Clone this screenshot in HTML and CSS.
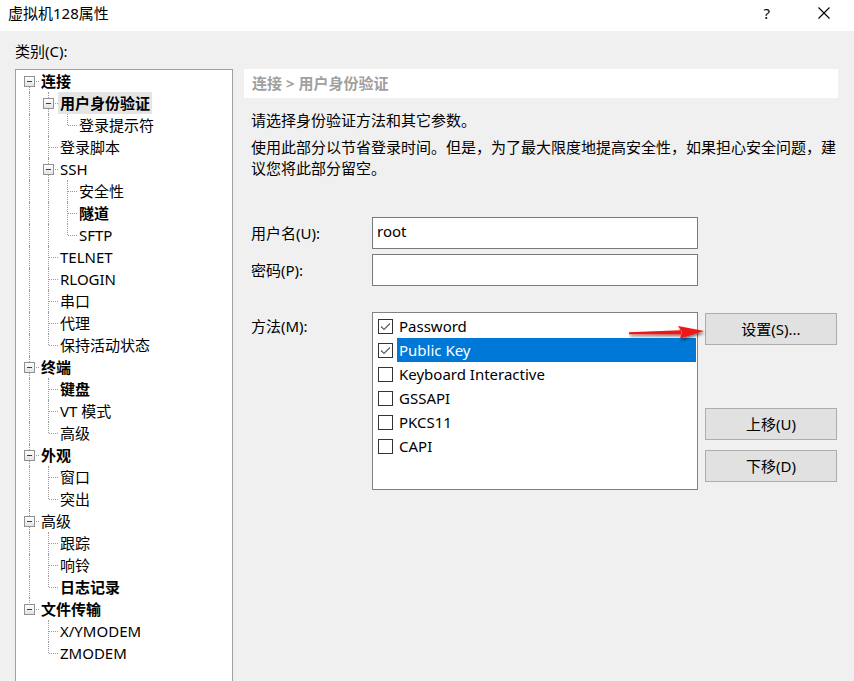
FILE: index.html
```html
<!DOCTYPE html>
<html lang="zh-CN">
<head>
<meta charset="utf-8">
<title>虚拟机128属性</title>
<link rel="stylesheet" href="styles.css">
</head>
<body>
<div class="window">
  <div class="titlebar">
    <span class="title">虚拟机128属性</span>
    <div class="ctrls">
      <span class="help">?</span>
      <svg class="close" width="12" height="12" viewBox="0 0 12 12"><path d="M0.5 0.5 L11.5 11.5 M11.5 0.5 L0.5 11.5" stroke="#000" stroke-width="1.1" fill="none"/></svg>
    </div>
  </div>
  <div class="body">
    <div class="cat-label">类别(C):</div>
    <div class="main">
      <div class="tree">
        <div class="row"><span class="c bf"><span class="bx"></span></span><span class="lbl b">连接</span></div>
        <div class="row"><span class="c v"></span><span class="c bm"><span class="bx"></span></span><span class="lbl b sel">用户身份验证</span></div>
        <div class="row"><span class="c v"></span><span class="c v"></span><span class="c l"></span><span class="lbl">登录提示符</span></div>
        <div class="row"><span class="c v"></span><span class="c t"></span><span class="lbl">登录脚本</span></div>
        <div class="row"><span class="c v"></span><span class="c bm"><span class="bx"></span></span><span class="lbl">SSH</span></div>
        <div class="row"><span class="c v"></span><span class="c v"></span><span class="c t"></span><span class="lbl">安全性</span></div>
        <div class="row"><span class="c v"></span><span class="c v"></span><span class="c t"></span><span class="lbl b">隧道</span></div>
        <div class="row"><span class="c v"></span><span class="c v"></span><span class="c l"></span><span class="lbl">SFTP</span></div>
        <div class="row"><span class="c v"></span><span class="c t"></span><span class="lbl">TELNET</span></div>
        <div class="row"><span class="c v"></span><span class="c t"></span><span class="lbl">RLOGIN</span></div>
        <div class="row"><span class="c v"></span><span class="c t"></span><span class="lbl">串口</span></div>
        <div class="row"><span class="c v"></span><span class="c t"></span><span class="lbl">代理</span></div>
        <div class="row"><span class="c v"></span><span class="c l"></span><span class="lbl">保持活动状态</span></div>
        <div class="row"><span class="c bm"><span class="bx"></span></span><span class="lbl b">终端</span></div>
        <div class="row"><span class="c v"></span><span class="c t"></span><span class="lbl b">键盘</span></div>
        <div class="row"><span class="c v"></span><span class="c t"></span><span class="lbl">VT 模式</span></div>
        <div class="row"><span class="c v"></span><span class="c l"></span><span class="lbl">高级</span></div>
        <div class="row"><span class="c bm"><span class="bx"></span></span><span class="lbl b">外观</span></div>
        <div class="row"><span class="c v"></span><span class="c t"></span><span class="lbl">窗口</span></div>
        <div class="row"><span class="c v"></span><span class="c l"></span><span class="lbl">突出</span></div>
        <div class="row"><span class="c bm"><span class="bx"></span></span><span class="lbl">高级</span></div>
        <div class="row"><span class="c v"></span><span class="c t"></span><span class="lbl">跟踪</span></div>
        <div class="row"><span class="c v"></span><span class="c t"></span><span class="lbl">响铃</span></div>
        <div class="row"><span class="c v"></span><span class="c l"></span><span class="lbl b">日志记录</span></div>
        <div class="row"><span class="c bl"><span class="bx"></span></span><span class="lbl b">文件传输</span></div>
        <div class="row"><span class="c"></span><span class="c t"></span><span class="lbl">X/YMODEM</span></div>
        <div class="row"><span class="c"></span><span class="c l"></span><span class="lbl">ZMODEM</span></div>
      </div>
      <div class="panel">
        <div class="crumb">连接 &gt; 用户身份验证</div>
        <div class="panel-body">
          <p class="p1">请选择身份验证方法和其它参数。</p>
          <p class="p2">使用此部分以节省登录时间。但是，为了最大限度地提高安全性，如果担心安全问题，建<br>议您将此部分留空。</p>
          <div class="frow first">
            <span class="flabel">用户名(U):</span>
            <div class="field">root</div>
          </div>
          <div class="frow">
            <span class="flabel">密码(P):</span>
            <div class="field"></div>
          </div>
          <div class="method">
            <span class="flabel mlabel">方法(M):</span>
            <div class="list">
              <div class="item"><span class="chk on"><svg width="13" height="13" viewBox="0 0 13 13"><path d="M2 6.5 L5 9.5 L11 3.5" stroke="#5a5a5a" stroke-width="1.1" fill="none"/></svg></span><span class="itxt">Password</span></div>
              <div class="item"><span class="chk on"><svg width="13" height="13" viewBox="0 0 13 13"><path d="M2 6.5 L5 9.5 L11 3.5" stroke="#5a5a5a" stroke-width="1.1" fill="none"/></svg></span><span class="itxt sel">Public Key</span></div>
              <div class="item"><span class="chk"></span><span class="itxt">Keyboard Interactive</span></div>
              <div class="item"><span class="chk"></span><span class="itxt">GSSAPI</span></div>
              <div class="item"><span class="chk"></span><span class="itxt">PKCS11</span></div>
              <div class="item"><span class="chk"></span><span class="itxt">CAPI</span></div>
            </div>
            <div class="btns">
              <div class="btn settings">设置(S)...</div>
              <div class="btn up">上移(U)</div>
              <div class="btn">下移(D)</div>
            </div>
          </div>
        </div>
      </div>
    </div>
  </div>
  <svg class="arrow" width="95" height="30" viewBox="620 316 95 30">
    <defs>
      <filter id="sh" x="-20%" y="-60%" width="140%" height="220%">
        <feDropShadow dx="1" dy="2" stdDeviation="1.4" flood-color="#000" flood-opacity="0.55"/>
      </filter>
    </defs>
    <g filter="url(#sh)" fill="#ee1414">
      <polygon points="629,332.3 681,330.2 681,334.2 629,334.3"/>
      <polygon points="678,326 704,331 680,338.5 682,332"/>
    </g>
  </svg>
</div>
</body>
</html>
```

FILE: styles.css
```css
* { box-sizing: border-box; }
html, body { margin: 0; padding: 0; }
body {
  font-family: "Noto Sans", "Noto Sans CJK SC", sans-serif;
  font-size: 15px;
  color: #000;
  background: #f0f0f0;
}
.window {
  position: relative;
  width: 854px;
  height: 681px;
  overflow: hidden;
  background: #f0f0f0;
}
.titlebar {
  height: 31px;
  background: #fff;
  display: flex;
  align-items: flex-start;
  justify-content: space-between;
}
.title {
  padding-left: 8px;
  line-height: 26px;
  font-size: 15px;
}
.ctrls {
  display: flex;
  align-items: center;
  height: 26px;
  padding-right: 24px;
}
.help {
  font-size: 15px;
  margin-right: 48px;
}
.close { display: block; }

.body { padding: 10px 0 0 15px; }
.cat-label { line-height: 21px; height: 21px; }
.main {
  display: flex;
  margin-top: 7px;
  align-items: flex-start;
}
.tree {
  width: 218px;
  height: 640px;
  flex: none;
  background: #fff;
  border: 1px solid #a0a0a0;
  padding: 0 0 0 4px;
}
.row {
  display: flex;
  align-items: center;
  height: 22px;
  white-space: nowrap;
}
.c {
  position: relative;
  flex: none;
  width: 19px;
  height: 22px;
}
.v::before, .t::before, .l::before,
.bm::before, .bl::before, .bf::before {
  content: '';
  position: absolute;
  left: 9px;
  top: 0;
  height: 22px;
  border-left: 1px dotted #9a9a9a;
}
.l::before, .bl::before { height: 11px; }
.bf::before { top: 11px; height: 11px; }
.t::after, .l::after {
  content: '';
  position: absolute;
  left: 10px;
  width: 9px;
  top: 11px;
  border-top: 1px dotted #9a9a9a;
}
.bf::after, .bm::after, .bl::after {
  content: '';
  position: absolute;
  left: 16px;
  width: 3px;
  top: 11px;
  border-top: 1px dotted #9a9a9a;
}
.bx {
  position: absolute;
  z-index: 1;
  left: 4px;
  top: 6px;
  width: 11px;
  height: 11px;
  border: 1px solid #919191;
  background: linear-gradient(#ffffff, #e3e3e3);
}
.bx::after {
  content: '';
  position: absolute;
  left: 2px;
  top: 4px;
  width: 5px;
  height: 1px;
  background: #2e3f66;
}
.lbl {
  height: 22px;
  line-height: 22px;
  padding: 0 2px;
}
.lbl.b { font-weight: 700; }
.lbl.sel { background: #e5e5e5; }

.panel {
  width: 594px;
  flex: none;
  margin-left: 11px;
}
.crumb {
  height: 29px;
  line-height: 29px;
  background: #fff;
  padding-left: 8px;
  color: #a0a0a0;
  font-weight: 700;
}
.panel-body { padding-left: 7px; }
.panel-body p { margin: 0; line-height: 21px; white-space: nowrap; }
.p1 { margin-top: 12px !important; }
.p2 { margin-top: 6px !important; }
.frow {
  display: flex;
  align-items: center;
  height: 32px;
  margin-top: 5px;
}
.frow.first { margin-top: 38px; }
.flabel {
  width: 121px;
  flex: none;
  line-height: 21px;
}
.field {
  width: 326px;
  height: 32px;
  background: #fff;
  border: 1px solid #7a7a7a;
  padding-left: 4px;
  line-height: 27px;
  font-size: 15px;
}
.method {
  display: flex;
  align-items: flex-start;
  margin-top: 26px;
}
.mlabel { padding-top: 4px; }
.list {
  width: 326px;
  height: 178px;
  flex: none;
  background: #fff;
  border: 1px solid #828282;
  padding-top: 1px;
}
.item {
  display: flex;
  align-items: center;
  height: 24px;
}
.chk {
  flex: none;
  width: 15px;
  height: 15px;
  margin-left: 5px;
  border: 1px solid #333;
  background: #fff;
  display: flex;
  align-items: center;
  justify-content: center;
}
.chk svg { display: block; }
.itxt {
  flex: 1;
  margin-left: 4px;
  margin-right: 1px;
  padding-left: 2px;
  height: 24px;
  line-height: 24px;
}
.itxt.sel { background: #0078d7; color: #fff; }
.btns {
  display: flex;
  flex-direction: column;
  margin-left: 7px;
  padding-top: 1px;
  width: 132px;
}
.btn {
  height: 32px;
  line-height: 30px;
  text-align: center;
  background: #e1e1e1;
  border: 1px solid #adadad;
  margin-top: 10px;
}
.btn.settings { margin-top: 0; }
.btn.up { margin-top: 63px; }
.arrow {
  position: absolute;
  left: 620px;
  top: 316px;
}
```
